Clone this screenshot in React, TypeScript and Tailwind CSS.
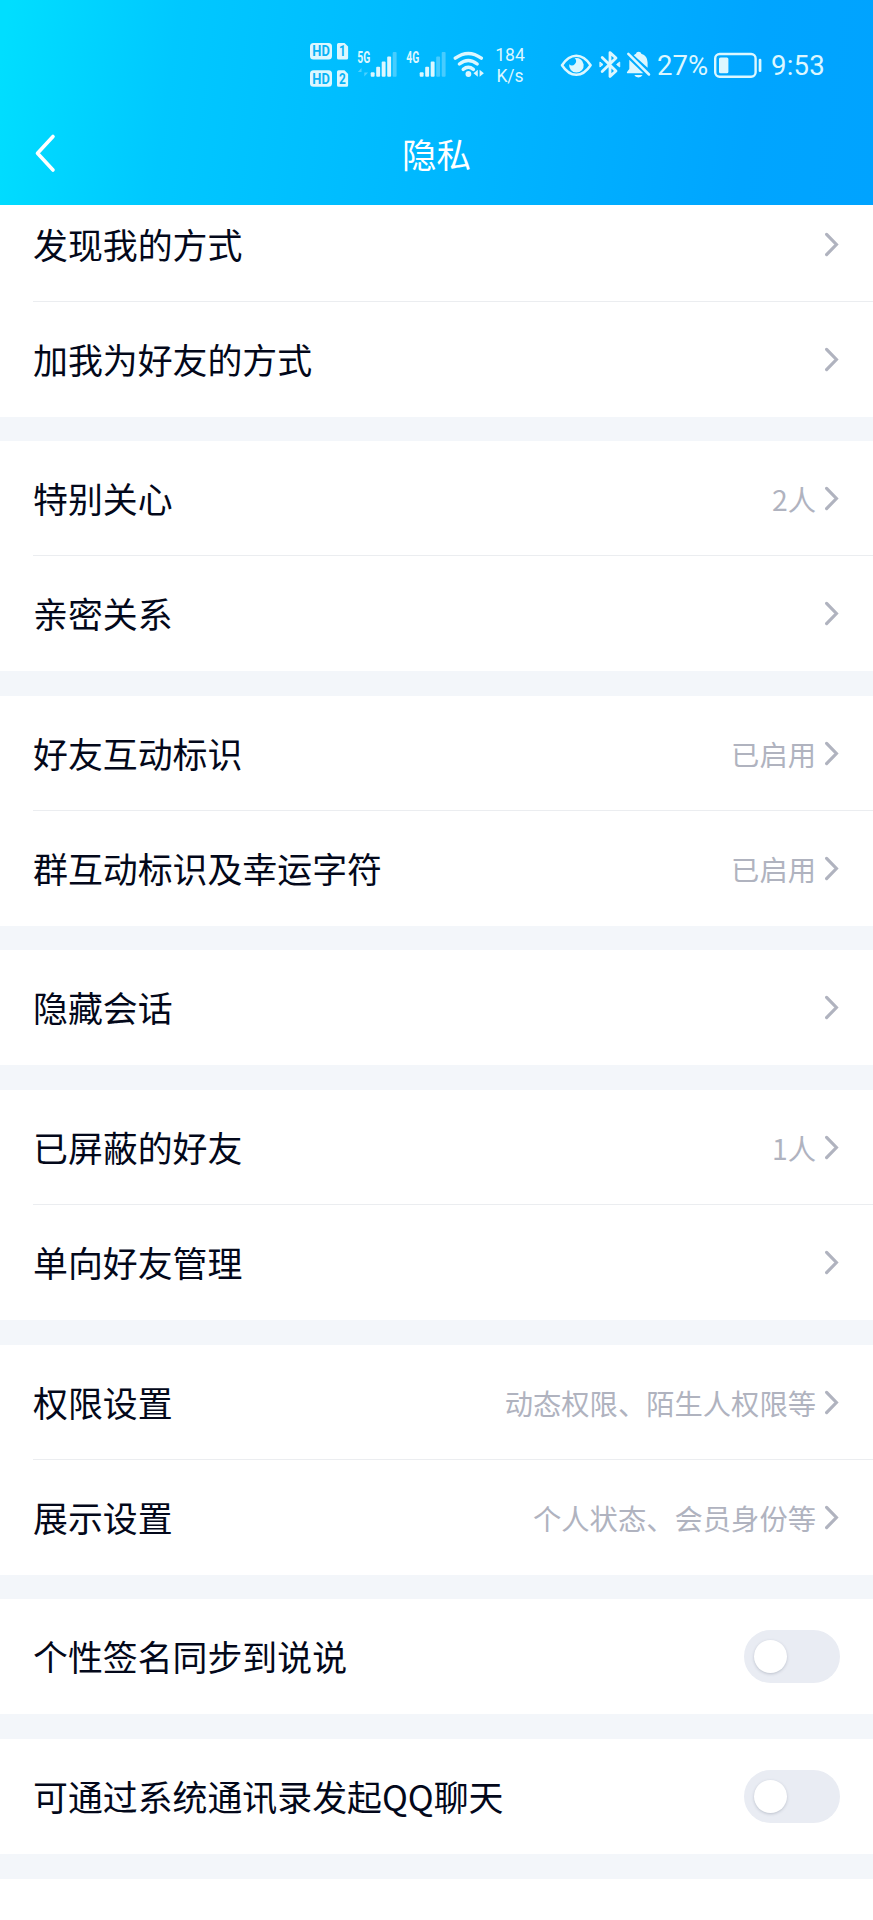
import type { ReactNode } from "react";

const INK = "#dcf7ff";

type RowData = { label: string; value?: string; toggle?: boolean };
type GroupData = { rows: RowData[]; gap: string };

const groups: GroupData[] = [
  { rows: [{ label: "特别关心", value: "2人" }, { label: "亲密关系" }], gap: "mt-[24px]" },
  { rows: [{ label: "好友互动标识", value: "已启用" }, { label: "群互动标识及幸运字符", value: "已启用" }], gap: "mt-[25px]" },
  { rows: [{ label: "隐藏会话" }], gap: "mt-[24px]" },
  { rows: [{ label: "已屏蔽的好友", value: "1人" }, { label: "单向好友管理" }], gap: "mt-[25px]" },
  {
    rows: [
      { label: "权限设置", value: "动态权限、陌生人权限等" },
      { label: "展示设置", value: "个人状态、会员身份等" },
    ],
    gap: "mt-[25px]",
  },
  { rows: [{ label: "个性签名同步到说说", toggle: true }], gap: "mt-[24px]" },
  { rows: [{ label: "可通过系统通讯录发起QQ聊天", toggle: true }], gap: "mt-[25px]" },
];

function Chevron() {
  return (
    <svg className="mb-px shrink-0" width="15" height="25" viewBox="0 0 15 25" fill="none">
      <path d="M1.6 2.4 L11.4 12.5 L1.6 22.6" stroke="#b0b3bf" strokeWidth="3.2" strokeLinecap="round" strokeLinejoin="miter" />
    </svg>
  );
}

function Toggle() {
  return (
    <button type="button" role="switch" aria-checked="false" className="flex h-[53px] w-[96px] items-center rounded-full bg-[#e9ecf3] pl-[10px]">
      <span className="h-[33px] w-[33px] rounded-full bg-white shadow-[0_1px_3px_rgba(90,100,120,0.3)]" />
    </button>
  );
}

function Row({ label, value, toggle }: RowData) {
  return (
    <div className="flex h-[115px] items-center justify-between pr-[33px]">
      <span className="pb-px text-[34.9px] leading-[50px] text-[#03081a]">{label}</span>
      {toggle ? (
        <Toggle />
      ) : (
        <span className="flex items-center gap-[9px]">
          {value && <span className="text-[28.3px] leading-[40px] text-[#b0b3bf]">{value}</span>}
          <Chevron />
        </span>
      )}
    </div>
  );
}

function Group({ children, className }: { children: ReactNode; className: string }) {
  return <section className={`bg-white pl-[33px] ${className}`}>{children}</section>;
}

function Rows({ rows }: { rows: RowData[] }) {
  return (
    <>
      {rows.map((r, i) => (
        <div key={r.label} className={i > 0 ? "shadow-[0_-1px_0_#ebedf0]" : ""}>
          <Row {...r} />
        </div>
      ))}
    </>
  );
}

function HdBadges() {
  return (
    <svg width="39" height="46" viewBox="310 42 39 46" className="shrink-0">
      {[43, 70.3].map((y, i) => (
        <g key={y} fontFamily="Roboto, sans-serif" fontWeight="700" fill="#08b2f5">
          <rect x="310" y={y} width="22" height="16.5" rx="3.5" fill={INK} />
          <text x="312.3" y={y + 13.3} fontSize="14.5" textLength="17.5" lengthAdjust="spacingAndGlyphs">HD</text>
          <path d={`M338.5 ${y} h6 l3.6 3.6 v11.4 a1.5 1.5 0 0 1 -1.5 1.5 h-8.1 a1.5 1.5 0 0 1 -1.5 -1.5 v-13.5 a1.5 1.5 0 0 1 1.5 -1.5z`} fill={INK} />
          <text x="342.5" y={y + 13.3} fontSize="14.5" textAnchor="middle" textLength="6.8" lengthAdjust="spacingAndGlyphs">{i + 1}</text>
        </g>
      ))}
    </svg>
  );
}

function Signal({ label, active, arrows }: { label: string; active: number; arrows?: boolean }) {
  const tops = [72.3, 66.8, 61.6, 56.6, 52];
  return (
    <svg width="40" height="42" viewBox="357 44 40 42" className="shrink-0" fill={INK}>
      <text x="357.3" y="63.3" fontFamily="Roboto, sans-serif" fontWeight="700" fontSize="15.8" textLength="13" lengthAdjust="spacingAndGlyphs">
        {label}
      </text>
      {arrows && <path d="M361.5 76.5 v-8.5 l-3.6 4 h3.6z M364.3 68 v8.5 l3.8 -4 h-3.8z" opacity="0.35" />}
      {tops.map((t, i) => (
        <rect key={t} x={370.7 + i * 5.5} y={t} width="3.9" height={76.7 - t} rx="1" opacity={i < active ? 1 : 0.32} />
      ))}
    </svg>
  );
}

function Wifi() {
  return (
    <svg width="32" height="28" viewBox="453 51 32 28" className="shrink-0" fill="none" stroke={INK} strokeWidth="3.4" strokeLinecap="round">
      <path d="M455.3 58.2 Q468.3 48.6 481.3 58.2" />
      <path d="M459.4 64 Q468.3 56.8 477.2 64" />
      <path d="M463.2 69.4 Q468.3 65.3 473.4 69.4" />
      <circle cx="468.4" cy="74" r="2.9" fill={INK} stroke="none" />
      <path d="M477.8 69.8 v7 l-4.3 -3.5z M479.6 69.8 v7 l4.3 -3.5z" fill={INK} stroke="none" />
    </svg>
  );
}

function Eye() {
  return (
    <svg width="32" height="24" viewBox="560 52 32 24" className="shrink-0" fill="none">
      <path d="M562 64.3 Q568.2 54.8 576.3 54.8 Q584.4 54.8 590.6 64.3 Q584.4 73.8 576.3 73.8 Q568.2 73.8 562 64.3z" stroke={INK} strokeWidth="2.5" strokeLinejoin="round" />
      <path d="M574.6 57.2 A7.3 7.3 0 1 1 569.2 63.2 A3.6 3.6 0 1 0 574.6 57.2z" fill={INK} />
    </svg>
  );
}

function Bluetooth() {
  return (
    <svg width="22" height="30" viewBox="599 50 22 30" className="shrink-0" fill="none" stroke={INK} strokeWidth="2.8" strokeLinejoin="round" strokeLinecap="round">
      <path d="M602.2 57.6 L616 71 L610 76.4 V52.6 L616 58 L602.2 71.4" />
      <path d="M600.2 62.3 l2.8 2.2 l-2.8 2.2z M619.4 62.3 l-2.8 2.2 l2.8 2.2z" fill={INK} strokeWidth="1" />
    </svg>
  );
}

function BellOff() {
  return (
    <svg width="25" height="28" viewBox="626 51 25 28" className="shrink-0" fill={INK}>
      <path d="M629.3 59.8 L643.3 73.3 H627.8 a0.9 0.9 0 0 1 -0.6 -1.6 L629.3 69z" />
      <path d="M633.8 55.2 Q635.2 54.2 636 53.8 Q636.2 51.8 638.6 51.8 Q641 51.8 641.3 53.8 Q647.6 56 647.6 62.5 V67.8z" />
      <path d="M634.3 75 h8.2 q-1 2.4 -4.1 2.4 q-3.1 0 -4.1 -2.4z" />
      <path d="M628.3 53.8 L649 74.5" stroke={INK} strokeWidth="2.5" strokeLinecap="round" />
    </svg>
  );
}

function Battery() {
  return (
    <svg width="49" height="26" viewBox="713 51 49 26" className="shrink-0" fill="none">
      <rect x="715.2" y="53" width="40.4" height="22.8" rx="4.5" stroke={INK} strokeWidth="2.4" />
      <rect x="719" y="56.5" width="9.4" height="15.8" rx="1.6" fill={INK} />
      <rect x="758.7" y="57.8" width="2.7" height="13.2" rx="1.3" fill={INK} />
    </svg>
  );
}

function StatusBar() {
  return (
    <div className="flex h-[130px] items-center pl-[310px] font-[Roboto,sans-serif] text-[#dcf7ff]">
      <HdBadges />
      <div className="ml-[8px] flex gap-[9px]">
        <Signal label="5G" active={4} arrows />
        <Signal label="4G" active={3} />
      </div>
      <div className="ml-[7px]">
        <Wifi />
      </div>
      <div className="ml-[9px] flex w-[32px] flex-col pt-px text-center text-[17.5px] leading-[21px]">
        <span>184</span>
        <span>K/s</span>
      </div>
      <div className="ml-[34px] flex items-center">
        <Eye />
        <div className="ml-[7px]"><Bluetooth /></div>
        <div className="ml-[5px]"><BellOff /></div>
      </div>
      <span className="ml-[6px] w-[52px] pt-[2px] text-[27.5px] leading-[30px]">27%</span>
      <div className="ml-[4px]"><Battery /></div>
      <span className="ml-[9px] pt-[2px] text-[27.5px] leading-[30px] tracking-[0.2px]">9:53</span>
    </div>
  );
}

export default function App() {
  return (
    <div className="h-[1920px] w-[873px] overflow-hidden bg-[#f3f6fa] font-['Noto_Sans_CJK_SC',sans-serif]" lang="zh-CN">
      <header className="h-[205px] bg-[linear-gradient(98deg,#00deff_1%,#00c8ff_20%,#00b8ff_50%,#00a5ff_85%,#00a3ff_100%)]">
        <StatusBar />
        <div className="grid h-[46px] grid-cols-[1fr_auto_1fr] items-center">
          <svg className="ml-[34px]" width="22" height="40" viewBox="34 133 22 40" fill="none">
            <path d="M53 136.5 L37.5 153.3 L53 170" stroke="#ffffff" strokeWidth="3.6" strokeLinecap="round" strokeLinejoin="round" />
          </svg>
          <h1 className="text-[34.5px] leading-[46px] font-normal text-white">隐私</h1>
        </div>
      </header>
      <main>
        <Group className="flex h-[212px] flex-col justify-end">
          <Rows rows={[{ label: "发现我的方式" }, { label: "加我为好友的方式" }]} />
        </Group>
        {groups.map((g) => (
          <Group key={g.rows[0].label} className={g.gap}>
            <Rows rows={g.rows} />
          </Group>
        ))}
        <div className="mt-[25px] h-[41px] bg-white" />
      </main>
    </div>
  );
}
